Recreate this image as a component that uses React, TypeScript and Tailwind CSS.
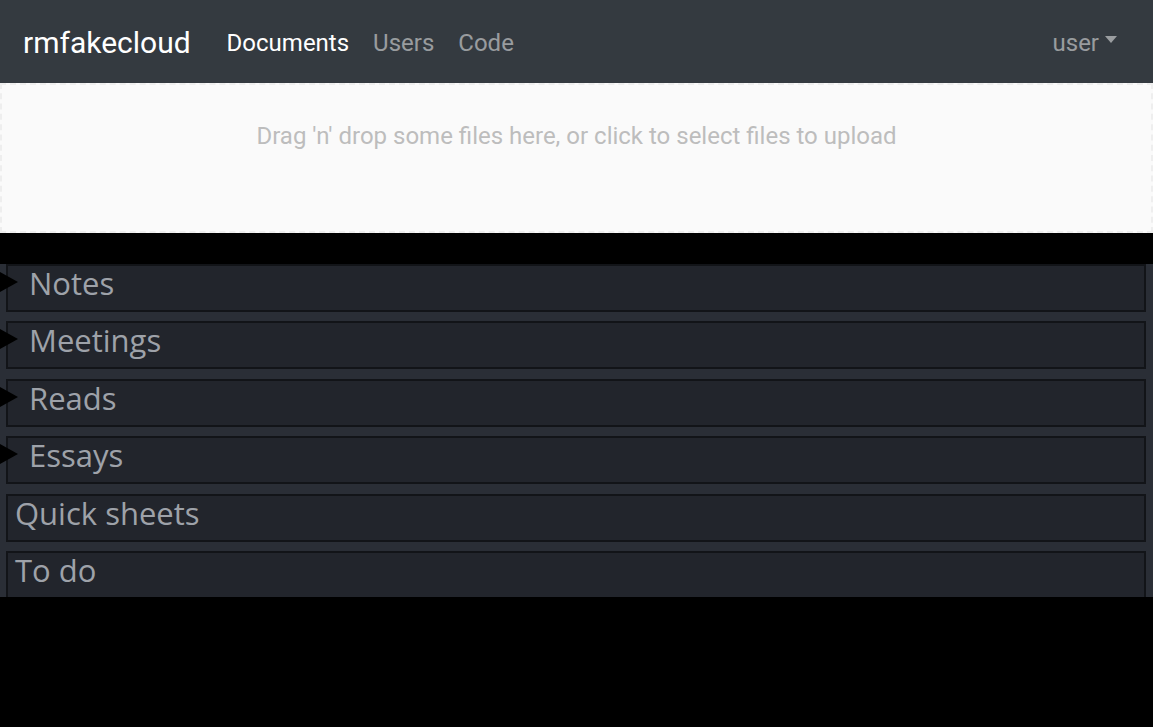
const items = [
  { name: 'Notes', folder: true },
  { name: 'Meetings', folder: true },
  { name: 'Reads', folder: true },
  { name: 'Essays', folder: true },
  { name: 'Quick sheets', folder: false },
  { name: 'To do', folder: false },
];

function Caret() {
  return (
    <svg width="18" height="20" viewBox="0 0 18 20" className="absolute left-0 top-[6px]">
      <polygon points="0,0 18,10 0,20" fill="#000" />
    </svg>
  );
}

export default function App() {
  return (
    <div className="min-h-screen bg-black font-['Roboto',sans-serif]">
      {/* Navbar */}
      <nav className="h-[83px] bg-[#343a40] flex items-center pl-[23px] pr-[36px] pt-[2px]">
        <span className="text-[30px] text-white leading-none mr-[36px]">rmfakecloud</span>
        <div className="flex items-center gap-[24px] text-[24px] leading-none">
          <span className="text-white">Documents</span>
          <span className="text-white/50">Users</span>
          <span className="text-white/50">Code</span>
        </div>
        <div className="ml-auto flex items-center gap-[6px] text-[24px] leading-none text-white/50">
          <span>user</span>
          <svg width="12" height="7" viewBox="0 0 12 7" className="mt-[-6px]">
            <polygon points="0,0 12,0 6,7" fill="currentColor" />
          </svg>
        </div>
      </nav>

      {/* Dropzone */}
      <div className="h-[150px] bg-[#fafafa] border-2 border-dashed border-[#eeeeee] flex justify-center pt-[36px]">
        <p className="text-[24px] leading-[30px] text-[#bdbdbd]">
          Drag 'n' drop some files here, or click to select files to upload
        </p>
      </div>

      {/* Documents tree */}
      <div className="mt-[31px] h-[333px] overflow-hidden bg-[#2a2e36] pl-[6px] pr-[7px] flex flex-col gap-[9.4px] font-['Open_Sans',sans-serif]">
        {items.map((it) => (
          <div
            key={it.name}
            className="relative h-[48px] shrink-0 bg-[#22252c] border-2 border-[#121418] flex items-start"
          >
            {it.folder && <div className="absolute left-[-8px] top-0"><Caret /></div>}
            <span className={`text-[31px] leading-[35px] text-[#9ea2a9] ${it.folder ? 'pl-[21px]' : 'pl-[7px]'}`}>
              {it.name}
            </span>
          </div>
        ))}
      </div>
    </div>
  );
}
